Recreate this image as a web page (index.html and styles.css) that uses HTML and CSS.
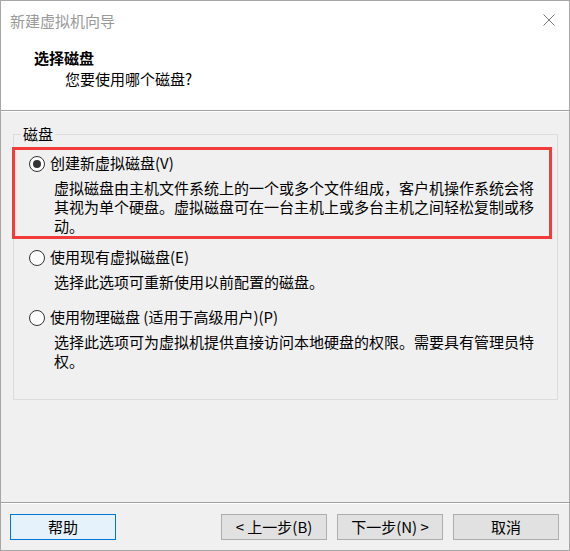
FILE: index.html
```html
<!DOCTYPE html>
<html lang="zh-CN">
<head>
<meta charset="utf-8">
<title>新建虚拟机向导</title>
<link rel="stylesheet" href="styles.css">
</head>
<body>
<div class="window">
  <div class="titlebar">
    <span class="title">新建虚拟机向导</span>
    <svg class="close" width="12" height="12" viewBox="0 0 12 12" aria-hidden="true">
      <path d="M0.5 0.5 L11.5 11.5 M11.5 0.5 L0.5 11.5" stroke="#7a7a7a" stroke-width="1" fill="none"/>
    </svg>
  </div>
  <div class="header">
    <div class="h-title">选择磁盘</div>
    <div class="h-sub">您要使用哪个磁盘?</div>
  </div>
  <div class="content">
    <fieldset class="group">
      <legend>磁盘</legend>
      <div class="option highlight">
        <div class="row"><span class="radio checked"></span><span>创建新虚拟磁盘(V)</span></div>
        <p class="desc">虚拟磁盘由主机文件系统上的一个或多个文件组成，客户机操作系统会将其视为单个硬盘。虚拟磁盘可在一台主机上或多台主机之间轻松复制或移动。</p>
      </div>
      <div class="option opt2">
        <div class="row"><span class="radio"></span><span>使用现有虚拟磁盘(E)</span></div>
        <p class="desc">选择此选项可重新使用以前配置的磁盘。</p>
      </div>
      <div class="option opt3">
        <div class="row"><span class="radio"></span><span>使用物理磁盘 (适用于高级用户)(P)</span></div>
        <p class="desc">选择此选项可为虚拟机提供直接访问本地硬盘的权限。需要具有管理员特权。</p>
      </div>
    </fieldset>
  </div>
  <div class="footer">
    <button class="btn btn-help">帮助</button>
    <div class="nav">
      <button class="btn">&lt; 上一步(B)</button>
      <button class="btn">下一步(N) &gt;</button>
      <button class="btn">取消</button>
    </div>
  </div>
</div>
</body>
</html>
```

FILE: styles.css
```css
html, body {
  margin: 0;
  padding: 0;
  background: #f0f0f0;
}

body {
  font-family: "Noto Sans CJK SC", "Microsoft YaHei", sans-serif;
  font-size: 15px;
  color: #000;
}

.window {
  width: 570px;
  height: 551px;
  box-sizing: border-box;
  border: 1px solid #a6a6a6;
  background: #f0f0f0;
  display: flex;
  flex-direction: column;
}

.titlebar {
  height: 39px;
  background: #fff;
  display: flex;
  align-items: center;
  justify-content: space-between;
  padding: 0 14px 0 9px;
}

.title {
  color: #999;
  font-size: 15px;
  line-height: 20px;
}

.close {
  display: block;
  margin-top: -1px;
}

.header {
  background: #fff;
  border-bottom: 1px solid #a0a0a0;
  box-shadow: 0 1px 0 #fff;
  padding: 7px 0 0 33px;
  box-sizing: border-box;
  height: 71px;
}

.h-title {
  font-weight: 700;
  line-height: 21px;
}

.h-sub {
  line-height: 21px;
  margin-left: 31px;
}

.content {
  flex: 1;
  padding: 13px 11px 0 12px;
}

.group {
  margin: 0;
  padding: 0 0 29px 0;
  border: 1px solid #dcdcdc;
  min-width: 0;
}

.group legend {
  margin-left: 7px;
  padding: 0 2px;
  line-height: 20px;
  font-size: 15px;
}

.option {
  padding-left: 15px;
}

.highlight {
  margin: 3px 5px 0 -2px;
  border: 3px solid #f23c3c;
  padding: 3px 0 1px 14px;
}

.opt2 {
  margin-top: 8px;
}

.opt3 {
  margin-top: 16px;
}

.row {
  display: flex;
  align-items: center;
  height: 20px;
  line-height: 20px;
}

.radio {
  width: 16px;
  height: 16px;
  box-sizing: border-box;
  border: 1px solid #333;
  border-radius: 50%;
  background: #fff;
  margin-right: 5px;
  margin-top: 1px;
  display: flex;
  align-items: center;
  justify-content: center;
}

.radio.checked::after {
  content: "";
  width: 8px;
  height: 8px;
  border-radius: 50%;
  background: #333;
}

.desc {
  margin: 5px 0 0 25px;
  max-width: 488px;
  line-height: 19px;
}

.footer {
  border-top: 1px solid #a0a0a0;
  box-shadow: inset 0 1px 0 #fff;
  padding: 11px 10px 10px 9px;
  display: flex;
  justify-content: space-between;
}

.nav {
  display: flex;
  gap: 10px;
}

.btn {
  width: 106px;
  height: 26px;
  box-sizing: border-box;
  border: 1px solid #adadad;
  background: #e1e1e1;
  font-family: inherit;
  font-size: 15px;
  color: #000;
  padding: 0;
  margin: 0;
  line-height: 22px;
}

.btn-help {
  border-color: #0078d7;
  background: #e5f1fb;
}
```
